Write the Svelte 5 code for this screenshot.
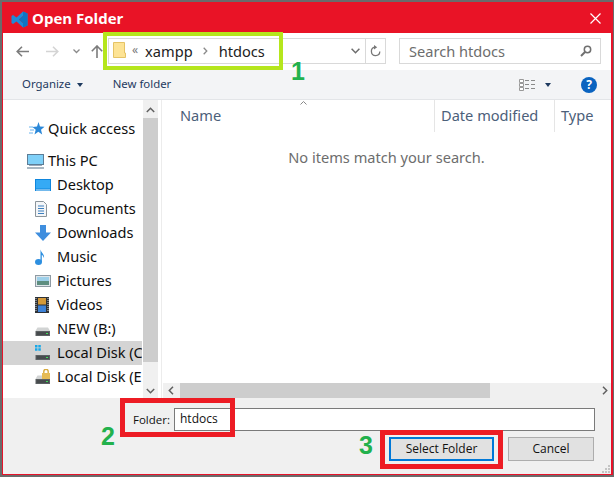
<script>
  const tree = [
    { label: 'This PC', icon: 'pc', top: true },
    { label: 'Desktop', icon: 'desktop' },
    { label: 'Documents', icon: 'docs' },
    { label: 'Downloads', icon: 'down' },
    { label: 'Music', icon: 'music' },
    { label: 'Pictures', icon: 'pics' },
    { label: 'Videos', icon: 'video' },
    { label: 'NEW (B:)', icon: 'disk' },
    { label: 'Local Disk (C:)', icon: 'win', selected: true },
    { label: 'Local Disk (E:)', icon: 'lock' }
  ];
</script>

<div class="page">
  <div class="window">
    <header class="title">
      <svg class="vs" width="17" height="17" viewBox="0 0 17 17">
        <path d="M12 0.5 L16.5 2.6 V14.4 L12 16.5 L5.5 10.4 L2 13 L0.5 12 V5 L2 4 L5.5 6.6 Z M12 5 L8 8.5 L12 12 Z" fill="#1f8ad8" fill-rule="evenodd"/>
        <path d="M12 0.5 L16.5 2.6 V14.4 L12 16.5 Z M12 5 V12 L8 8.5 Z" fill="#0f74c4" fill-rule="evenodd"/>
      </svg>
      <span class="title-text">Open Folder</span>
      <svg class="x" width="11" height="11" viewBox="0 0 11 11"><path d="M0.5 0.5 L10.5 10.5 M10.5 0.5 L0.5 10.5" stroke="#fff" stroke-width="1.2"/></svg>
    </header>

    <nav class="nav">
      <svg class="nav-ico back" width="13" height="11" viewBox="0 0 13 11"><path d="M6 0.7 L1.2 5.5 L6 10.3 M1.2 5.5 H13" fill="none" stroke="#7c7c7c" stroke-width="1.6"/></svg>
      <svg class="nav-ico fwd" width="13" height="11" viewBox="0 0 13 11"><path d="M7 0.7 L11.8 5.5 L7 10.3 M11.8 5.5 H0" fill="none" stroke="#d4d4d4" stroke-width="1.6"/></svg>
      <svg class="nav-ico drop" width="7" height="5" viewBox="0 0 7 5"><path d="M0.5 0.5 L3.5 3.5 L6.5 0.5" fill="none" stroke="#8a8a8a" stroke-width="1.3"/></svg>
      <svg class="nav-ico up" width="12" height="13" viewBox="0 0 12 13"><path d="M0.8 6.2 L6 1 L11.2 6.2 M6 1 V13" fill="none" stroke="#7c7c7c" stroke-width="1.6"/></svg>
      <div class="address">
        <svg class="folder" width="13" height="16" viewBox="0 0 13 16"><path d="M0.5 0.5 H11.5 V11 H12.5 V15.5 H0.5 Z" fill="#fde394" stroke="#e5c365"/></svg>
        <span class="crumb-sep first">«</span>
        <span class="crumb">xampp</span>
        <svg class="chev" width="5" height="8" viewBox="0 0 5 8"><path d="M0.7 0.7 L3.8 4 L0.7 7.3" fill="none" stroke="#8a8a8a" stroke-width="1.3"/></svg>
        <span class="crumb">htdocs</span>
        <svg class="addr-down" width="9" height="6" viewBox="0 0 9 6"><path d="M0.6 0.8 L4.5 4.7 L8.4 0.8" fill="none" stroke="#6d6d6d" stroke-width="1.5"/></svg>
        <span class="refresh">
          <svg width="11" height="12" viewBox="0 0 11 12"><path d="M5 2.2 A4.2 4.2 0 1 0 9.8 6.5" fill="none" stroke="#777" stroke-width="1.3"/><path d="M4 0 L7.2 2.2 L4 4.4 Z" fill="#777"/></svg>
        </span>
      </div>
      <div class="search">
        <span class="search-text">Search htdocs</span>
        <svg width="12" height="12" viewBox="0 0 12 12"><circle cx="7.5" cy="4.5" r="3.2" fill="none" stroke="#6f6f6f" stroke-width="1.5"/><path d="M5 7 L1 11" stroke="#6f6f6f" stroke-width="2"/></svg>
      </div>
    </nav>

    <div class="toolbar">
      <span class="tool organize">Organize</span>
      <span class="caret"></span>
      <span class="tool newf">New folder</span>
      <svg class="views" width="17" height="12" viewBox="0 0 17 12">
        <path d="M0.5 0.5 H4.5 V3.5 H0.5 Z M0.5 4.5 H4.5 V7.5 H0.5 Z M0.5 8.5 H4.5 V11.5 H0.5 Z" fill="#fff" stroke="#999"/>
        <path d="M6 1.5 H10 M12 1.5 H16 M6 5.5 H10 M12 5.5 H16 M6 9.5 H10 M12 9.5 H16" stroke="#8a8a8a"/>
      </svg>
      <span class="caret views-caret"></span>
      <span class="help">?</span>
    </div>

    <main class="body">
      <aside class="side">
        <div class="tree">
          <div class="row quick">
            <svg class="ico" width="16" height="14" viewBox="0 0 16 14"><path d="M9.5 0 L11 4.5 L15.5 4.7 L12 7.7 L13.2 12.5 L9.3 9.8 L5.5 12.5 L6.7 7.7 L3.5 5 L8 4.5 Z" fill="#2b88d8"/><path d="M0 5 H4 M1 8 H5 M0 11 H4" stroke="#6ab4ee"/></svg>
            <span class="label">Quick access</span>
          </div>
          {#each tree as item}
            <div class="row" class:top={item.top} class:selected={item.selected}>
              <span class="ico-box">
                {#if item.icon === 'pc'}
                  <svg width="17" height="15" viewBox="0 0 17 15"><rect x="0.5" y="0.5" width="16" height="10" fill="#7fd0f8" stroke="#5d7d96"/><rect x="2" y="11" width="13" height="1" fill="#9ab"/><rect x="0" y="13" width="17" height="2" fill="#a9b7c2"/></svg>
                {:else if item.icon === 'desktop'}
                  <svg width="16" height="12" viewBox="0 0 16 12"><rect width="16" height="12" fill="#0f86dd"/><rect x="1" y="1" width="14" height="8.5" fill="#35aaf5"/><rect x="1" y="10.5" width="14" height="1" fill="#d7ecfb"/></svg>
                {:else if item.icon === 'docs'}
                  <svg width="12" height="16" viewBox="0 0 12 16"><path d="M0.5 0.5 H8.5 L11.5 3.5 V15.5 H0.5 Z" fill="#f4f6f8" stroke="#8b949b"/><path d="M3 5 H9 M3 7.5 H9 M3 10 H9 M3 12.5 H9" stroke="#3c7fbf"/></svg>
                {:else if item.icon === 'down'}
                  <svg width="16" height="16" viewBox="0 0 16 16"><path d="M5 0 H11 V7.5 H16 L8 16 L0 7.5 H5 Z" fill="#3f8ede"/></svg>
                {:else if item.icon === 'music'}
                  <svg width="10" height="16" viewBox="0 0 10 16"><ellipse cx="3.5" cy="13" rx="3.5" ry="3" fill="#2d8fe0"/><path d="M5.5 13 V0.5 C6 4 9.5 4.5 9 9 C8 6.5 7 6 6.8 6 V13 Z" fill="#2d8fe0"/></svg>
                {:else if item.icon === 'pics'}
                  <svg width="16" height="12" viewBox="0 0 16 12"><rect x="0.5" y="0.5" width="15" height="11" fill="#dfe6ea" stroke="#8e9aa3"/><rect x="2" y="2" width="12" height="4" fill="#9ed0ea"/><rect x="2" y="6" width="12" height="4" fill="#5e8e80"/></svg>
                {:else if item.icon === 'video'}
                  <svg width="14" height="16" viewBox="0 0 14 16"><rect width="14" height="16" fill="#2d3136"/><rect x="3" y="1" width="8" height="6.5" fill="#d49a3a"/><rect x="3" y="8.5" width="8" height="6.5" fill="#3d82d8"/><path d="M1 1 V15 M13 1 V15" stroke="#cfd4d8" stroke-dasharray="1 1"/></svg>
                {:else}
                  <svg class="disk" width="16" height="16" viewBox="0 0 16 16">
                    <path d="M2.5 6.5 H13 L15 10 H0.5 Z" fill="#d2d4d4"/>
                    <rect x="0.5" y="10" width="14.5" height="5" fill="#5c6163"/>
                    <rect x="1.5" y="11" width="12.5" height="3" fill="#474b4d"/>
                    <rect x="11" y="12" width="2" height="1" fill="#3fe05a"/>
                    {#if item.icon === 'win'}
                      <path d="M0 0 H2.5 V2.5 H0 Z M3.3 0 H5.8 V2.5 H3.3 Z M0 3.3 H2.5 V5.8 H0 Z M3.3 3.3 H5.8 V5.8 H3.3 Z" fill="#18a8e8"/>
                    {/if}
                    {#if item.icon === 'lock'}
                      <rect x="7" y="4" width="8" height="6" fill="#e6bb54"/>
                      <path d="M8.8 4 V2.5 A2.2 2.2 0 0 1 13.2 2.5 V4" fill="none" stroke="#d8ab3e" stroke-width="1.4"/>
                    {/if}
                  </svg>
                {/if}
              </span>
              <span class="label">{item.label}</span>
            </div>
          {/each}
        </div>
        <div class="vscroll">
          <svg class="sb-arrow" width="9" height="6" viewBox="0 0 9 6"><path d="M0.8 5 L4.5 1.3 L8.2 5" fill="none" stroke="#606060" stroke-width="1.5"/></svg>
          <div class="vthumb"></div>
          <svg class="sb-arrow" width="9" height="6" viewBox="0 0 9 6"><path d="M0.8 1 L4.5 4.7 L8.2 1" fill="none" stroke="#606060" stroke-width="1.5"/></svg>
        </div>
      </aside>

      <section class="content">
        <div class="cols">
          <svg class="sort" width="7" height="4" viewBox="0 0 7 4"><path d="M0.5 3.5 L3.5 0.5 L6.5 3.5" fill="none" stroke="#888"/></svg>
          <span class="col name">Name</span>
          <span class="col date">Date modified</span>
          <span class="col type">Type</span>
        </div>
        <p class="empty">No items match your search.</p>
        <div class="hscroll">
          <svg width="6" height="9" viewBox="0 0 6 9"><path d="M5 0.8 L1.3 4.5 L5 8.2" fill="none" stroke="#606060" stroke-width="1.5"/></svg>
          <div class="hthumb"></div>
          <svg width="6" height="9" viewBox="0 0 6 9"><path d="M1 0.8 L4.7 4.5 L1 8.2" fill="none" stroke="#606060" stroke-width="1.5"/></svg>
        </div>
      </section>
    </main>

    <footer class="foot">
      <div class="folder-row">
        <span class="folder-label">Folder:</span>
        <div class="input">htdocs</div>
      </div>
      <div class="btn-row">
        <div class="btn primary">Select Folder</div>
        <div class="btn">Cancel</div>
      </div>
      <svg class="grip" width="9" height="9" viewBox="0 0 9 9"><path d="M6 0 H8 V2 H6 Z M3 3 H5 V5 H3 Z M6 3 H8 V5 H6 Z M0 6 H2 V8 H0 Z M3 6 H5 V8 H3 Z M6 6 H8 V8 H6 Z" fill="#c4c4c4"/></svg>
    </footer>
  </div>

  <div class="mark green"></div>
  <div class="mark red two"></div>
  <div class="mark red three"></div>
  <span class="num n1">1</span>
  <span class="num n2">2</span>
  <span class="num n3">3</span>
</div>

<style>
  :global(body) { margin: 0; background: #6b6b6b; }
  .page {
    position: relative;
    width: 614px;
    height: 477px;
    padding: 2px 1px 2px 2px;
    box-sizing: border-box;
    overflow: hidden;
    background: #6b6b6b;
    font-family: "Noto Sans", "Open Sans", sans-serif;
    color: #111;
  }
  .window {
    height: 100%;
    border: solid #e8132a;
    border-width: 0 2px 1px 1px;
    box-sizing: border-box;
    display: flex;
    flex-direction: column;
    background: #fff;
  }
  .title {
    height: 31px;
    flex: none;
    background: #e91326;
    display: flex;
    align-items: center;
    padding: 0 10px 0 8px;
  }
  .vs { margin-right: 4px; margin-top: 3px; }
  .title-text {
    color: #fff;
    font-family: "Open Sans", sans-serif;
    font-weight: 700;
    font-size: 15px;
    line-height: 18px;
  }
  .x { margin-left: auto; margin-top: 1px; }

  .nav {
    height: 37px;
    flex: none;
    position: relative;
    display: flex;
    align-items: center;
    padding: 0 10px 0 13px;
  }
  .nav-ico { flex: none; }
  .fwd { margin-left: 17px; }
  .drop { margin-left: 14px; }
  .up { margin-left: 11px; }
  .address {
    margin-left: 5px;
    margin-top: -2px;
    width: 278px;
    height: 26px;
    flex: none;
    box-sizing: border-box;
    border: 1px solid #d9d9d9;
    display: flex;
    align-items: center;
    padding-left: 4px;
  }
  .folder { margin-top: -2px; }
  .crumb-sep { color: #777; font-size: 12px; margin: -3px 7px 0 6px; }
  .crumb { color: #222; font-size: 14.6px; line-height: 20px; }
  .chev { margin: 0 11px 0 10px; }
  .addr-down { margin-left: auto; margin-right: 5px; }
  .refresh {
    width: 19px;
    height: 100%;
    border-left: 1px solid #d9d9d9;
    display: flex;
    align-items: center;
    justify-content: center;
  }
  .search {
    margin-left: 13px;
    margin-top: -2px;
    width: 202px;
    height: 26px;
    flex: none;
    box-sizing: border-box;
    border: 1px solid #d9d9d9;
    display: flex;
    align-items: center;
    justify-content: space-between;
    padding: 0 8px 0 9px;
    color: #6d6d6d;
    font-size: 14.6px;
  }
  .search-text { line-height: 20px; padding-top: 1px; }

  .toolbar {
    height: 30px;
    flex: none;
    background: #f3f4f6;
    border-bottom: 1px solid #e3e5e8;
    box-sizing: border-box;
    display: flex;
    align-items: center;
    padding: 0 14px 0 19px;
    color: #1e3a5f;
    font-size: 11.4px;
  }
  .tool { margin-top: -2px; }
  .caret {
    width: 0;
    height: 0;
    border: 3.5px solid transparent;
    border-top: 4px solid #1e3a5f;
    border-bottom: 0;
    margin-left: 6px;
  }
  .newf { margin-left: 30px; }
  .views { margin-left: auto; }
  .views-caret { margin-left: 9px; }
  .help {
    margin-left: 30px;
    width: 16px;
    height: 16px;
    border-radius: 50%;
    background: #0a63c0;
    color: #fff;
    font-weight: 700;
    font-size: 12px;
    line-height: 16px;
    text-align: center;
  }

  .body {
    flex: 1;
    min-height: 0;
    display: flex;
  }
  .side {
    width: 155px;
    flex: none;
    display: flex;
    padding-right: 3px;
    border-right: 1px solid #ececec;
    box-sizing: content-box;
  }
  .tree {
    width: 139px;
    flex: none;
    padding-top: 17px;
    overflow: hidden;
    font-size: 14.6px;
  }
  .row {
    height: 24px;
    display: flex;
    align-items: center;
    padding-left: 28px;
    white-space: nowrap;
    overflow: hidden;
    box-sizing: border-box;
  }
  .row.quick { padding-left: 26px; gap: 3px; }
  .row.top { margin-top: 8px; padding-left: 24px; }
  .row.selected { background: #d4d4d4; }
  .ico-box {
    flex: none;
    display: flex;
    justify-content: flex-start;
    align-items: center;
    width: 22px;
    margin-left: 4px;
    box-sizing: border-box;
  }
  .row.top .ico-box { width: 21px; margin-left: 0; }
  .label { color: #0f0f0f; padding-bottom: 2px; }
  .vscroll {
    width: 15px;
    margin-left: 1px;
    flex: none;
    background: #f0f0f0;
    display: flex;
    flex-direction: column;
    align-items: center;
    padding-top: 7px;
    box-sizing: border-box;
  }
  .vthumb { width: 15px; height: 244px; background: #cdcdcd; margin: 5px 0 26px; }

  .content {
    flex: 1;
    min-width: 0;
    position: relative;
    display: flex;
    flex-direction: column;
  }
  .cols {
    height: 32px;
    flex: none;
    position: relative;
    display: flex;
    align-items: center;
    font-size: 14.6px;
    color: #4c607a;
  }
  .sort { position: absolute; left: 138px; top: 1px; }
  .col { height: 100%; display: flex; align-items: center; box-sizing: border-box; padding-bottom: 2px; }
  .name { width: 272px; padding-left: 18px; }
  .date { width: 120px; padding-left: 6px; border-left: 1px solid #e5e5e5; white-space: nowrap; }
  .type { padding-left: 6px; border-left: 1px solid #e5e5e5; }
  .empty {
    margin: 15px 0 0;
    text-align: center;
    font-size: 14.6px;
    color: #6d6d6d;
    flex: 1;
  }
  .hscroll {
    height: 15px;
    flex: none;
    margin-left: 1px;
    background: #f0f0f0;
    display: flex;
    align-items: center;
    padding: 0 3px 0 5px;
    box-sizing: border-box;
  }
  .hthumb { width: 310px; height: 15px; background: #cdcdcd; margin: 0 auto 0 6px; }

  .foot {
    height: 76px;
    flex: none;
    position: relative;
    background: #f0f0f0;
    box-sizing: border-box;
    padding: 10px 16px 0 130px;
    font-family: "Open Sans", sans-serif;
    font-size: 11.5px;
  }
  .folder-row { display: flex; align-items: center; gap: 6px; }
  .folder-label { color: #111; width: 35px; white-space: nowrap; }
  .input {
    flex: 1;
    height: 23px;
    box-sizing: border-box;
    border: 1px solid #7a7a7a;
    background: #fff;
    padding-left: 5px;
    line-height: 20px;
    font-size: 12px;
  }
  .btn-row {
    display: flex;
    justify-content: flex-end;
    gap: 14px;
    margin-top: 6px;
    margin-right: 1px;
  }
  .btn {
    width: 86px;
    height: 24px;
    box-sizing: border-box;
    background: #e1e1e1;
    border: 1px solid #adadad;
    text-align: center;
    line-height: 22px;
    font-size: 12px;
  }
  .btn.primary { width: 105px; border: 2px solid #0078d7; line-height: 20px; }
  .grip { position: absolute; right: 0; bottom: 0; }

  .mark { position: absolute; box-sizing: border-box; }
  .green { left: 103px; top: 32px; width: 180px; height: 38px; border: 4px solid #b5e61d; }
  .red { border: 5px solid #ed1c24; }
  .two { left: 120px; top: 398px; width: 115px; height: 39px; }
  .three { left: 380px; top: 430px; width: 123px; height: 39px; }
  .num {
    position: absolute;
    color: #22b14c;
    font-family: "Liberation Sans", sans-serif;
    font-weight: 700;
    font-size: 25px;
    line-height: 25px;
  }
  .n1 { left: 291px; top: 59px; }
  .n2 { left: 101px; top: 424px; }
  .n3 { left: 359px; top: 433px; }
</style>
